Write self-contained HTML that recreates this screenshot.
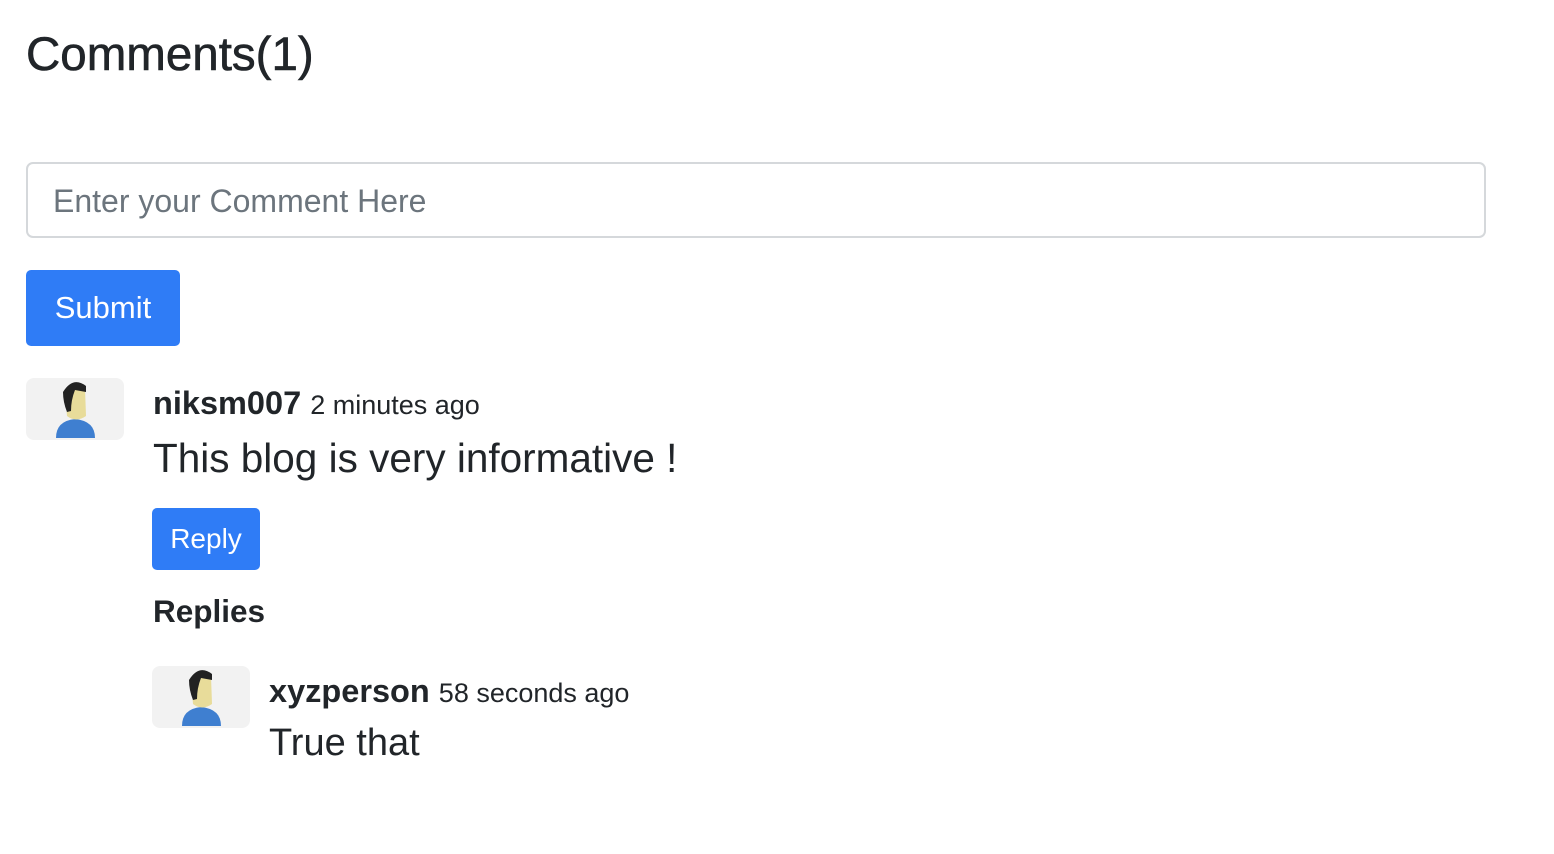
<!DOCTYPE html>
<html><head><style>
body{margin:0;background:#fff;font-family:"Liberation Sans",Arial,sans-serif;color:#212529;width:1554px;height:854px;overflow:hidden;position:relative}
.a{position:absolute;white-space:nowrap}
.av{position:absolute;width:98px;height:62px;background:#f2f2f2;border-radius:8px}
.btn{position:absolute;background:#2f7cf6;color:#fff;border-radius:5px;display:flex;align-items:center;justify-content:center}
</style></head><body>
<div class="a" style="left:26px;top:27px;font-size:47.5px;line-height:56px;-webkit-text-stroke:0.6px #212529">Comments(1)</div>
<div class="a" style="left:26px;top:162px;width:1456px;height:72px;border:2px solid #d5d8db;border-radius:7px"></div>
<div class="a" style="left:53px;top:181px;font-size:32px;line-height:40px;color:#6c757d">Enter your Comment Here</div>
<div class="btn" style="left:26px;top:270px;width:154px;height:76px;font-size:31px">Submit</div>

<div class="av" style="left:26px;top:378px">
<svg width="98" height="62" viewBox="0 0 98 62"><path d="M30 60 Q30 43 49 41 Q69 43 69 60Z" fill="#3f7fd0"/><path d="M39 12 Q49 2 59 10 L60 38 Q50 45 41 38Z" fill="#e8dc9a"/><path d="M37 14 Q47 -2 60 8 L60 14 L49 12 Q45 22 45 33 L41 34 Q37 24 37 14Z" fill="#222"/></svg></div>
<div class="a" style="left:153px;top:384px;font-size:32.5px;line-height:38px"><b>niksm007</b> <span style="font-size:27px">2 minutes ago</span></div>
<div class="a" style="left:153px;top:434px;font-size:40.5px;line-height:48px">This blog is very informative !</div>
<div class="btn" style="left:152px;top:508px;width:108px;height:62px;font-size:28px">Reply</div>
<div class="a" style="left:153px;top:592px;font-size:31.5px;line-height:38px;font-weight:bold">Replies</div>

<div class="av" style="left:152px;top:666px">
<svg width="98" height="62" viewBox="0 0 98 62"><path d="M30 60 Q30 43 49 41 Q69 43 69 60Z" fill="#3f7fd0"/><path d="M39 12 Q49 2 59 10 L60 38 Q50 45 41 38Z" fill="#e8dc9a"/><path d="M37 14 Q47 -2 60 8 L60 14 L49 12 Q45 22 45 33 L41 34 Q37 24 37 14Z" fill="#222"/></svg></div>
<div class="a" style="left:269px;top:672px;font-size:32.5px;line-height:38px"><b>xyzperson</b> <span style="font-size:27px">58 seconds ago</span></div>
<div class="a" style="left:269px;top:720px;font-size:38px;line-height:46px">True that</div>
</body></html>
